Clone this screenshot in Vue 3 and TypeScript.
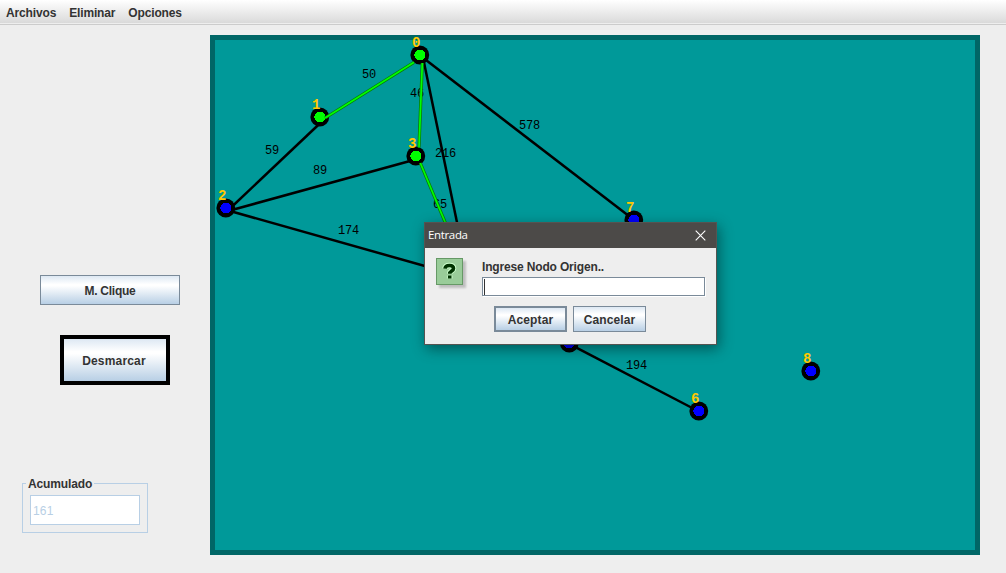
<script setup lang="ts">
interface Line { x1: number; y1: number; x2: number; y2: number }
interface Node { id: number; x: number; y: number; marked: boolean }
interface Weight { value: number; x: number; y: number }

const menus: string[] = ['Archivos', 'Eliminar', 'Opciones']

const edges: Line[] = [
  { x1: 230, y1: 208.5, x2: 324, y2: 119.5 },
  { x1: 230, y1: 210.5, x2: 420, y2: 158.3 },
  { x1: 230, y1: 211, x2: 462, y2: 276.5 },
  { x1: 423.5, y1: 60, x2: 466, y2: 266 },
  { x1: 424, y1: 58.5, x2: 638, y2: 223 },
  { x1: 572, y1: 345.3, x2: 699, y2: 411.5 },
]

const path: Line[] = [
  { x1: 414, y1: 62.3, x2: 325, y2: 118 },
  { x1: 422.3, y1: 63, x2: 419, y2: 147.5 },
  { x1: 420.3, y1: 163, x2: 462, y2: 262.5 },
]

const nodes: Node[] = [
  { id: 0, x: 420, y: 55, marked: true },
  { id: 1, x: 320, y: 117, marked: true },
  { id: 2, x: 226, y: 208, marked: false },
  { id: 3, x: 416, y: 156, marked: true },
  { id: 5, x: 569.5, y: 343, marked: false },
  { id: 6, x: 699, y: 411, marked: false },
  { id: 7, x: 634, y: 220, marked: false },
  { id: 8, x: 811, y: 371, marked: false },
]

const weights: Weight[] = [
  { value: 50, x: 362, y: 78 },
  { value: 46, x: 410, y: 97 },
  { value: 59, x: 265, y: 154 },
  { value: 89, x: 313, y: 174 },
  { value: 174, x: 338, y: 234 },
  { value: 216, x: 435, y: 157.4 },
  { value: 65, x: 433, y: 208 },
  { value: 578, x: 519, y: 129 },
  { value: 194, x: 626, y: 369 },
]
</script>

<template>
  <div class="app">
    <nav class="menubar">
      <span v-for="m in menus" :key="m" class="menu">{{ m }}</span>
    </nav>
    <div class="main">
      <aside class="side">
        <button class="btn clique">M. Clique</button>
        <button class="btn unmark">Desmarcar</button>
        <fieldset class="group">
          <legend>Acumulado</legend>
          <div class="total">161</div>
        </fieldset>
      </aside>
      <section class="board">
        <svg class="graph" width="760" height="510" viewBox="215 40 760 510">
          <line v-for="(e, i) in edges" :key="'e' + i" class="edge" :x1="e.x1" :y1="e.y1" :x2="e.x2" :y2="e.y2" />
          <text v-for="(w, i) in weights" :key="'w' + i" class="weight" :x="w.x" :y="w.y">{{ w.value }}</text>
          <g v-for="n in nodes" :key="n.id">
            <circle class="ring" :cx="n.x - 0.2" :cy="n.y" r="9.4" />
            <circle :class="n.marked ? 'marked' : 'plain'" :cx="n.x - 0.2" :cy="n.y" r="5.5" />
          </g>
          <g v-for="(p, i) in path" :key="'p' + i">
            <line class="path-edge" :x1="p.x1" :y1="p.y1" :x2="p.x2" :y2="p.y2" />
            <line class="path-core" :x1="p.x1" :y1="p.y1" :x2="p.x2" :y2="p.y2" />
          </g>
          <text v-for="n in nodes" :key="'t' + n.id" class="name" :x="n.x - 8" :y="n.y - 8">{{ n.id }}</text>
        </svg>
      </section>
    </div>

    <div class="dialog">
      <header class="titlebar">
        <span>Entrada</span>
        <svg class="close" width="11" height="11" viewBox="0 0 11 11"><path d="M.7.7 10.3 10.3M10.3.7.7 10.3" /></svg>
      </header>
      <div class="content">
        <svg class="question" width="32" height="32" viewBox="0 0 32 32">
          <rect class="q-shadow" x="3" y="3" width="27" height="27" />
          <rect class="q-box" x=".5" y=".5" width="26" height="26" />
          <path class="q-halo" d="M9 10.6C9.2 8.3 11 7.5 13.5 7.5s4 .9 4 2.9c0 2.7-3.8 2.4-3.8 5.4M13.7 17.4v3" />
          <path class="q-mark" d="M9 10.6C9.2 8.3 11 7.5 13.5 7.5s4 .9 4 2.9c0 2.7-3.8 2.4-3.8 5.4M13.7 17.4v3" />
        </svg>
        <div class="form">
          <label>Ingrese Nodo Origen..</label>
          <div class="field"><span class="caret"></span></div>
        </div>
      </div>
      <footer class="actions">
        <button class="btn accept">Aceptar</button>
        <button class="btn cancel">Cancelar</button>
      </footer>
    </div>
  </div>
</template>

<style>
body { background: #eee; }
</style>

<style scoped>
.app {
  position: relative;
  width: 1006px;
  height: 573px;
  overflow: hidden;
  background: #eee;
  color: #333;
  font: bold 12px "Liberation Sans", Arial, sans-serif;
}
.app * { box-sizing: border-box; }
.menubar {
  display: flex;
  gap: 13px;
  height: 25px;
  padding: 0 6px;
  line-height: 26px;
  letter-spacing: -.15px;
  background: linear-gradient(#fff, #dadada 23px, #eee 23px, #eee 24px, #ccc 24px);
}
.main { display: flex; height: 548px; }
.side { width: 210px; padding-top: 250px; }
.btn {
  display: block;
  margin: 0;
  padding: 0;
  border: 1px solid #7a8a99;
  background: linear-gradient(#dde8f3, #fff 30%, #fff 35%, #b8cfe5);
  color: #333;
  font: inherit;
  letter-spacing: .1px;
}
.clique { width: 140px; height: 30px; margin-left: 40px; padding-top: 2px; letter-spacing: -.25px; }
.unmark { width: 110px; height: 50px; margin: 30px 0 0 60px; padding: 2px 2px 0 0; border: 4px solid #000; letter-spacing: .18px; }
.group {
  width: 126px;
  height: 56px;
  margin: 92px 0 0 22px;
  padding: 5px 0 0 7px;
  border: 1px solid #b8cfe5;
}
.group legend { margin-left: -4px; padding: 1px 2px 0; line-height: 12px; letter-spacing: -.12px; }
.total {
  width: 110px;
  height: 30px;
  padding-left: 2px;
  border: 1px solid #b8cfe5;
  background: #fff;
  color: #b8cfe5;
  font-weight: normal;
  line-height: 30px;
  letter-spacing: .2px;
}
.board { width: 770px; height: 520px; margin-top: 10px; border: 5px solid #066; background: #099; }
.graph { display: block; overflow: visible; }
.edge { stroke: #000; stroke-width: 2.5; }
.path-edge { stroke: #087a08; stroke-width: 3.2; }
.path-core { stroke: #0f0; stroke-width: 1.7; }
.ring { fill: #000; }
.marked { fill: #0f0; shape-rendering: crispEdges; }
.plain { fill: #00f; shape-rendering: crispEdges; }
.weight { font: normal 12px "Liberation Mono", "Courier New", monospace; letter-spacing: -.2px; fill: #000; }
.name { font: bold 14px "Liberation Mono", "Courier New", monospace; fill: #ffc800; }
.dialog {
  position: absolute;
  left: 424px;
  top: 222px;
  width: 293px;
  height: 123px;
  border: 1px solid #555451;
  background: #eee;
  box-shadow: 2px 4px 13px rgba(0, 0, 0, .42);
}
.titlebar {
  display: flex;
  align-items: center;
  justify-content: space-between;
  height: 25px;
  padding: 0 10px 0 3px;
  background: #4c4a48;
  color: #fff;
  font: normal 11.5px "Open Sans", "Noto Sans", sans-serif;
  letter-spacing: -.35px;
}
.titlebar span { padding-bottom: 3px; }
.close { fill: none; stroke: #fff; stroke-width: 1.1; }
.content { display: flex; gap: 14px; padding: 10px 0 0 11px; }
.question { flex: none; }
.q-shadow { fill: #000; opacity: .2; filter: blur(1px); }
.q-box { fill: #9c9; stroke: #696; }
.q-halo { fill: none; stroke: #cfc; stroke-width: 5.6; }
.q-mark { fill: none; stroke: #030; stroke-width: 3.6; }
.form label { display: block; height: 19px; line-height: 18px; letter-spacing: -.16px; }
.field { width: 223px; height: 19px; padding: 1px; border: 1px solid #7a8a99; background: #fff; box-shadow: 1px 1px #fff; }
.caret { display: block; width: 1px; height: 16px; background: #333; }
.actions { display: flex; gap: 6px; margin: 10px 0 0 69px; }
.actions .btn { width: 73px; height: 26px; padding-top: 1px; }
.actions .accept { border-width: 2px; }
</style>
